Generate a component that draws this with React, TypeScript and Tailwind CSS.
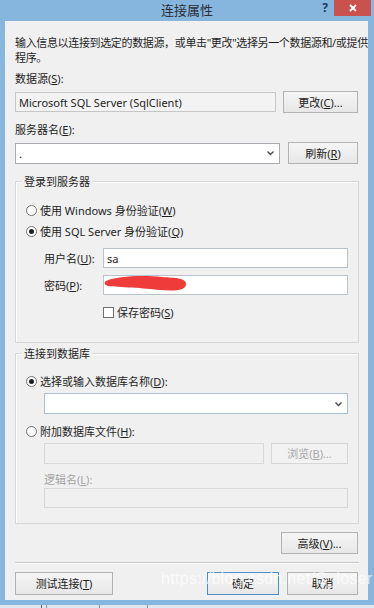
import type { ReactNode } from "react";

const Chevron = () => (
    <svg width="9" height="6" viewBox="0 0 9 6">
        <path d="M1.5 1.5l3 3 3-3" fill="none" stroke="#4a4a4a" strokeWidth="1.4" />
    </svg>
);

function Button({
    children,
    className = "",
    disabled = false,
    focused = false,
}: {
    children: ReactNode;
    className?: string;
    disabled?: boolean;
    focused?: boolean;
}) {
    const border = focused
        ? "border-[#4d8ec6]"
        : disabled
          ? "border-[#d6d6d6]"
          : "border-[#b3b3b3]";
    const fill = disabled
        ? "bg-[#f2f2f2] text-[#a6a6a6]"
        : "bg-gradient-to-b from-[#f5f5f5] to-[#e7e7e7] text-[#222]";
    return (
        <div className={`flex items-center justify-center border ${border} ${fill} ${className}`}>
            {children}
        </div>
    );
}

function Radio({ checked, children }: { checked?: boolean; children: ReactNode }) {
    return (
        <div className="flex h-[15px] items-center pl-[10px]">
            <span className="mr-[3px] flex h-[11px] w-[11px] items-center justify-center rounded-full border border-[#707070] bg-white">
                {checked && <span className="h-[5px] w-[5px] rounded-full bg-[#1e1e1e]" />}
            </span>
            <span>{children}</span>
        </div>
    );
}

function Group({ title, children }: { title: string; children: ReactNode }) {
    return (
        <div className="flex flex-col border border-[#d6d6d6] shadow-[inset_1px_1px_0_#fff]">
            <span className="-mt-[8px] ml-[6px] h-[15px] self-start bg-[#f0f0f0] px-[2px]">
                {title}
            </span>
            {children}
        </div>
    );
}

export default function App() {
    return (
        <div className="flex h-[608px] w-[374px] flex-col overflow-hidden bg-[#86b6de] font-['Noto_Sans','Noto_Sans_CJK_SC',sans-serif] text-[11px] leading-[15px] text-[#1e1e1e]">
            {/* title bar */}
            <div className="grid h-[21px] grid-cols-[1fr_auto_1fr]">
                <div />
                <div className="pt-[2px] text-[13px] leading-[17px] text-[#2a2f36]">连接属性</div>
                <div className="flex items-start justify-end">
                    <span className="mr-[6px] mt-[1px] text-[12px] font-bold leading-[14px] text-[#1d3b60]">?</span>
                    <div className="mr-[3px] flex h-[16px] w-[37px] items-center justify-center bg-[#c9524e]">
                        <svg width="8" height="8" viewBox="0 0 8 8">
                            <path d="M1 1l6 6M7 1L1 7" stroke="#fff" strokeWidth="1.8" />
                        </svg>
                    </div>
                </div>
            </div>

            {/* client */}
            <div className="relative ml-[5px] flex h-[579px] w-[363px] flex-col bg-[#f0f0f0] pl-[10px] pr-[9px] pt-[14px]">
                <p className="whitespace-nowrap tracking-[-0.35px]">
                    输入信息以连接到选定的数据源，或单击"更改"选择另一个数据源和/或提供
                    <br />
                    程序。
                </p>

                <div className="mt-[6px]">
                    数据源(<u>S</u>):
                </div>
                <div className="mt-[5px] flex h-[22px] items-center gap-[7px] pr-[1px]">
                    <div className="flex h-[20px] flex-1 items-center border border-[#c6c6c6] bg-[#f3f3f3] pl-[3px]">
                        Microsoft SQL Server (SqlClient)
                    </div>
                    <Button className="h-[22px] w-[75px]">
                        更改(<u>C</u>)...
                    </Button>
                </div>

                <div className="mt-[9px]">
                    服务器名(<u>E</u>):
                </div>
                <div className="mt-[5px] flex h-[22px] items-center gap-[8px] pr-[1px]">
                    <div className="flex h-[21px] flex-1 items-center justify-between border border-[#abadb3] bg-white pl-[3px] pr-[4px]">
                        <span>.</span>
                        <Chevron />
                    </div>
                    <Button className="h-[22px] w-[70px]">
                        刷新(<u>R</u>)
                    </Button>
                </div>

                {/* login group */}
                <div className="mt-[17px]">
                    <Group title="登录到服务器">
                        <div className="mt-[14px]">
                            <Radio>
                                使用 Windows 身份验证(<u>W</u>)
                            </Radio>
                        </div>
                        <div className="mt-[6px]">
                            <Radio checked>
                                使用 SQL Server 身份验证(<u>Q</u>)
                            </Radio>
                        </div>
                        <div className="mt-[9px] flex h-[20px] items-center pl-[28px] pr-[10px]">
                            <span className="w-[59px]">
                                用户名(<u>U</u>):
                            </span>
                            <div className="flex h-[20px] flex-1 items-center border border-[#b9c3cc] bg-white pl-[3px]">
                                sa
                            </div>
                        </div>
                        <div className="mt-[7px] flex h-[20px] items-center pl-[28px] pr-[10px]">
                            <span className="w-[59px]">
                                密码(<u>P</u>):
                            </span>
                            <div className="relative h-[20px] flex-1 border border-[#b9c3cc] bg-white">
                                <svg className="absolute -top-[3px] left-0" width="84" height="20" viewBox="0 0 84 20">
                                    <path
                                        d="M2 8 C 12 3, 40 2, 58 4 C 72 5, 82 5, 82 11 C 82 18, 70 18, 56 17 C 40 15, 15 14, 4 13 C 0 12, 0 9, 2 8 Z"
                                        fill="#f03b3b"
                                    />
                                </svg>
                            </div>
                        </div>
                        <div className="ml-[87px] mt-[10px] flex h-[15px] items-center">
                            <span className="mr-[3px] h-[11px] w-[11px] border border-[#707070] bg-white" />
                            <span>
                                保存密码(<u>S</u>)
                            </span>
                        </div>
                        <div className="h-[22px]" />
                    </Group>
                </div>

                {/* database group */}
                <div className="mt-[10px]">
                    <Group title="连接到数据库">
                        <div className="mt-[13px]">
                            <Radio checked>
                                选择或输入数据库名称(<u>D</u>):
                            </Radio>
                        </div>
                        <div className="mt-[4px] pl-[28px] pr-[10px]">
                            <div className="flex h-[21px] items-center justify-end border border-[#abc0d2] bg-white pr-[4px]">
                                <Chevron />
                            </div>
                        </div>
                        <div className="mt-[10px]">
                            <Radio>
                                附加数据库文件(<u>H</u>):
                            </Radio>
                        </div>
                        <div className="mt-[4px] flex h-[21px] gap-[7px] pl-[28px] pr-[10px]">
                            <div className="h-[21px] flex-1 border border-[#d9d9d9] bg-[#f0f0f0]" />
                            <Button disabled className="h-[21px] w-[77px]">
                                浏览(<u>B</u>)...
                            </Button>
                        </div>
                        <div className="mt-[8px] pl-[28px] text-[#a3a3a3]">
                            逻辑名(<u>L</u>):
                        </div>
                        <div className="mt-[1px] pl-[28px] pr-[10px]">
                            <div className="h-[20px] border border-[#d9d9d9] bg-[#f0f0f0]" />
                        </div>
                        <div className="h-[15px]" />
                    </Group>
                </div>

                <div className="mt-[8px] flex justify-end pr-[1px]">
                    <Button className="h-[22px] w-[77px]">
                        高级(<u>V</u>)...
                    </Button>
                </div>

                <div className="mt-[8px] h-px bg-[#c4c4c4] shadow-[0_1px_0_#fff]" />

                <div className="mt-[9px] flex h-[23px] items-center pr-[1px]">
                    <Button className="h-[23px] w-[98px]">
                        测试连接(<u>T</u>)
                    </Button>
                    <div className="flex-1" />
                    <Button focused className="h-[23px] w-[72px]">
                        确定
                    </Button>
                    <Button className="ml-[8px] h-[23px] w-[71px]">取消</Button>
                </div>

                {/* watermark */}
                <div className="pointer-events-none absolute left-[156px] top-[548px] font-['Liberation_Sans',sans-serif] text-[16px] leading-[20px] tracking-[0.3px] text-white/70">
                    https://blog.csdn.net/C_loser
                </div>
            </div>

            <div className="h-[5px]" />
            <div className="flex h-[3px] bg-[#dfe6ed]">
                <div className="w-[42px] border-r border-[#5a6570]" />
                <div className="w-[5px] border-r border-[#8a96a2]" />
                <div className="w-[53px] border-r border-[#8a96a2]" />
                <div className="w-[48px] border-r border-[#8a96a2]" />
            </div>
        </div>
    );
}
